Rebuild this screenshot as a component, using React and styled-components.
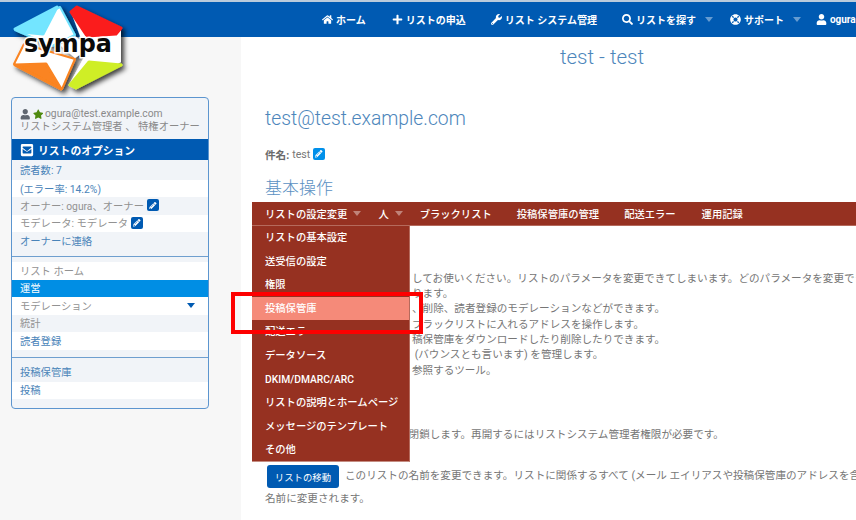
import React from 'react';
import styled, { createGlobalStyle } from 'styled-components';
import { FaHome, FaPlus, FaWrench, FaSearch, FaLifeRing, FaUser, FaStar, FaEnvelopeSquare, FaPencilAlt } from 'react-icons/fa';

const Global = createGlobalStyle`
  html, body { margin: 0; padding: 0; width: 856px; height: 520px; overflow: hidden; background: #fff; }
  body { font-family: Roboto, "Noto Sans CJK JP", sans-serif; font-size: 10.6px; color: #767676; }
  * { box-sizing: border-box; }
`;

const Page = styled.div`
  position: relative;
  width: 963px;
  height: 520px;
  overflow: hidden;
  border-top: 2px solid #b9cbdc;
`;
const Header = styled.header`
  height: 35px;
  background: #005ab2;
  display: flex;
  align-items: center;
  padding-left: 322px;
  color: #fff;
  font-weight: 700;
  font-size: 10px;
  white-space: nowrap;
`;
const NavItem = styled.span`
  display: inline-flex;
  align-items: center;
  gap: 3px;
  margin-right: ${p => p.$gap}px;
  svg { font-size: 11px; flex: none; }
`;
const Caret = styled.i`
  display: inline-block;
  width: 0;
  height: 0;
  margin-left: 6px;
  border-left: 4.5px solid transparent;
  border-right: 4.5px solid transparent;
  border-top: 5px solid ${p => p.$color || 'rgba(255,255,255,.4)'};
`;
const Columns = styled.div`
  display: grid;
  grid-template-columns: 241px 722px;
  height: 483px;
`;
const Side = styled.aside`
  background: #f7f7f7;
  padding: 60px 32px 0 11px;
`;
const Card = styled.div`
  border: 1px solid #5c95cf;
  border-radius: 4px;
  overflow: hidden;
  background: #f1f4f8;
  height: 312px;
  font-size: 10.3px;
`;
const UserBox = styled.div`
  height: 41px;
  padding: 10px 0 0 8px;
  line-height: 12.5px;
  color: #8a8a8a;
  white-space: nowrap;
  div:first-child { display: flex; align-items: center; gap: 2px; }
  svg { font-size: 10.5px; }
`;
const CardTitle = styled.div`
  height: 21px;
  background: #005ab2;
  color: #fff;
  font-weight: 700;
  font-size: 10.8px;
  display: flex;
  align-items: center;
  gap: 4px;
  padding-left: 8px;
  svg { font-size: 14px; }
`;
const Row = styled.div`
  height: ${p => p.$h || 17.5}px;
  background: ${p => (p.$active ? '#008ee4' : p.$alt ? '#f1f4f8' : '#fff')};
  color: ${p => (p.$active ? '#fff' : p.$link ? '#4a84b9' : '#929292')};
  display: flex;
  align-items: center;
  gap: 3px;
  padding: 0 13px 1px 8px;
  white-space: nowrap;
`;
const Divider = styled.div`
  height: 6px;
  margin-top: ${p => p.$top || 0}px;
  border-top: 1px solid #6f9fcf;
`;
const EditBadge = styled.span`
  display: inline-flex;
  width: 12px;
  height: 12px;
  border-radius: 2px;
  align-items: center;
  justify-content: center;
  background: ${p => p.$color};
  color: #fff;
  vertical-align: -2px;
  svg { font-size: 7.5px; }
`;
const Spacer = styled.span`
  flex: 1;
`;
const Main = styled.main`
  background: #fff;
`;
const Title = styled.h1`
  margin: 0;
  height: 40px;
  line-height: 40px;
  text-align: center;
  font-weight: 300;
  font-size: 20.5px;
  color: #4d86bb;
`;
const Address = styled.h2`
  margin: 27px 0 0 24px;
  height: 30px;
  line-height: 30px;
  font-weight: 300;
  font-size: 19.3px;
  color: #4d86bb;
`;
const Subject = styled.div`
  margin: 12px 0 0 24px;
  height: 16px;
  display: flex;
  align-items: center;
  gap: 3px;
  font-size: 10.6px;
  b { font-weight: 700; color: #6a6a6a; }
`;
const Section = styled.h3`
  margin: 14px 0 0 24px;
  height: 24px;
  line-height: 24px;
  font-weight: 300;
  font-size: 17px;
  color: #5a90c2;
`;
const Bar = styled.nav`
  position: relative;
  margin: 2px 0 0 11px;
  height: 24px;
  background: #963121;
  display: flex;
  align-items: center;
  padding-left: 13px;
  color: #fff;
  font-size: 10.3px;
  font-weight: 500;
  white-space: nowrap;
  border-bottom: 1px solid #b56a5c;
`;
const BarItem = styled.span`
  display: inline-flex;
  align-items: center;
  margin-right: ${p => p.$gap}px;
`;
const Drop = styled.div`
  position: absolute;
  left: 0;
  top: 24px;
  width: 158px;
  height: 236px;
  background: #963121;
  z-index: 2;
  border-bottom: 1px solid #c58d82;
  border-right: 1px solid #b56a5c;
`;
const DropItem = styled.div`
  height: 23.6px;
  line-height: 23.6px;
  padding-left: 13px;
  background: ${p => (p.$active ? '#f58a79' : 'transparent')};
`;
const Body = styled.div`
  margin: 44.5px 0 0 24px;
  white-space: nowrap;
`;
const Line = styled.div`
  height: 15.4px;
  line-height: 15.4px;
`;
const Lead = styled.span`
  display: inline-block;
  width: 147px;
  overflow: hidden;
  vertical-align: top;
  font-size: 10px;
`;
const Action = styled.p`
  margin: ${p => p.$top}px 0 0 24px;
  line-height: 21px;
  white-space: nowrap;
`;
const Button = styled.button`
  display: inline-block;
  width: 72px;
  height: 23px;
  margin: 0 6px 0 2px;
  padding: 0;
  border: 0;
  border-radius: 3px;
  background: #005ab2;
  color: #fff;
  font: 400 9.4px Roboto, "Noto Sans CJK JP", sans-serif;
  vertical-align: middle;
`;
const Highlight = styled.div`
  position: absolute;
  left: 231px;
  top: 290px;
  width: 192px;
  height: 41.5px;
  border: 4.5px solid #fe0000;
  z-index: 5;
`;
const LogoWrap = styled.div`
  position: absolute;
  left: 0;
  top: -2px;
  width: 135px;
  height: 100px;
  z-index: 4;
`;

function Logo() {
  return (
    <LogoWrap>
      <svg width="135" height="100" viewBox="0 0 135 100">
        <defs>
          <filter id="sh" x="-10%" y="-10%" width="130%" height="130%">
            <feDropShadow dx="3" dy="3" stdDeviation="2.5" floodColor="#000" floodOpacity=".75" />
          </filter>
        </defs>
        <g filter="url(#sh)" strokeLinejoin="round">
          <polygon points="15,30 60,7 75,35 52,46" fill="#fff" stroke="#6fe3ff" strokeWidth="2" />
          <polygon points="15,29 57,7 43,34 21,32" fill="#73e5ff" stroke="#73e5ff" strokeWidth="3" />
          <polygon points="71,12 77,7 121,29 121,62 89,60" fill="#fff" />
          <polygon points="71,12 77,7 121,28 116,34 87,36" fill="#fb1c1c" stroke="#fb1c1c" strokeWidth="3" />
          <polygon points="121,62 76,89 69,85 88,50" fill="#fff" />
          <polygon points="89,62 121,65 76,88 70,85" fill="#cfee26" stroke="#cfee26" strokeWidth="3" />
          <polygon points="24,44 75,59 62,89 14,64" fill="#fff" stroke="#fa8420" strokeWidth="2" />
          <polygon points="15,65 46,64 61,89" fill="#fa8420" stroke="#fa8420" strokeWidth="3" />
          <polygon points="60,45 75,36 90,48 75,58" fill="#fff" />
        </g>
        <text
          x="24"
          y="51.5"
          textLength="88"
          lengthAdjust="spacingAndGlyphs"
          fontFamily="DejaVu Sans"
          fontWeight="700"
          fontSize="25"
          fill="#0a0a0a"
          stroke="#fff"
          strokeWidth="3"
          paintOrder="stroke"
        >
          sympa
        </text>
      </svg>
    </LogoWrap>
  );
}

const menu = ['リストの基本設定', '送受信の設定', '権限', '投稿保管庫', '配送エラー', 'データソース', 'DKIM/DMARC/ARC', 'リストの説明とホームページ', 'メッセージのテンプレート', 'その他'];

export default function App() {
  return (
    <Page>
      <Global />
      <Logo />
      <Highlight />
      <Header>
        <NavItem $gap={26}><FaHome />ホーム</NavItem>
        <NavItem $gap={25}><FaPlus />リストの申込</NavItem>
        <NavItem $gap={25}><FaWrench />リスト システム管理</NavItem>
        <NavItem $gap={17}><FaSearch />リストを探す<Caret /></NavItem>
        <NavItem $gap={15}><FaLifeRing />サポート<Caret /></NavItem>
        <NavItem $gap={0}><FaUser />ogura@test.example.com</NavItem>
      </Header>
      <Columns>
        <Side>
          <Card>
            <UserBox>
              <div><FaUser color="#5f6670" /><FaStar color="#4f8a10" /><span>ogura@test.example.com</span></div>
              <div>リストシステム管理者 、 特権オーナー</div>
            </UserBox>
            <CardTitle><FaEnvelopeSquare />リストのオプション</CardTitle>
            <Row $alt $link $h={20}>読者数: 7</Row>
            <Row $link $h={17}>(エラー率: 14.2%)</Row>
            <Row $alt>オーナー: ogura、オーナー<EditBadge $color="#005ab2"><FaPencilAlt /></EditBadge></Row>
            <Row>モデレータ: モデレータ<EditBadge $color="#005ab2"><FaPencilAlt /></EditBadge></Row>
            <Row $alt $link $h={18}>オーナーに連絡</Row>
            <Divider $top={6} />
            <Row $h={17.5}>リスト ホーム</Row>
            <Row $active>運営</Row>
            <Row>モデレーション<Spacer /><Caret $color="#005ab2" /></Row>
            <Row $alt>統計</Row>
            <Row $link>読者登録</Row>
            <Divider $top={7} />
            <Row $alt $link $h={19}>投稿保管庫</Row>
            <Row $link>投稿</Row>
          </Card>
        </Side>
        <Main>
          <Title>test - test</Title>
          <Address>test@test.example.com</Address>
          <Subject><b>件名:</b> test <EditBadge $color="#0090ea"><FaPencilAlt /></EditBadge></Subject>
          <Section>基本操作</Section>
          <Bar>
            <BarItem $gap={17}>リストの設定変更<Caret /></BarItem>
            <BarItem $gap={17}>人<Caret /></BarItem>
            <BarItem $gap={25}>ブラックリスト</BarItem>
            <BarItem $gap={25}>投稿保管庫の管理</BarItem>
            <BarItem $gap={26}>配送エラー</BarItem>
            <BarItem $gap={0}>運用記録</BarItem>
            <Drop>
              {menu.map((m, i) => <DropItem key={m} $active={i === 3}>{m}</DropItem>)}
            </Drop>
          </Bar>
          <Body>
            <Line><Lead>これらの機能はすべて十分注意</Lead>してお使いください。リストのパラメータを変更できてしまいます。どのパラメータを変更できるかは権限によって異なります。</Line>
            <Line><Lead>権限により利用できる項目があ</Lead>ります。</Line>
            <Line><Lead>モデレーションでは投稿の配信</Lead>、削除、読者登録のモデレーションなどができます。</Line>
            <Line><Lead>ブラックリストの設定項目では</Lead>ブラックリストに入れるアドレスを操作します。</Line>
            <Line><Lead>保管庫の管理では、リストの投</Lead>稿保管庫をダウンロードしたり削除したりできます。</Line>
            <Line><Lead>配送エラーでは配送エラー読者</Lead> (バウンスとも言います) を管理します。</Line>
            <Line><Lead>運用記録はリストの運用記録を</Lead>参照するツール。</Line>
          </Body>
          <Action $top={46}><Button>リストの閉鎖</Button>このリストを閉鎖します。再開するにはリストシステム管理者権限が必要です。</Action>
          <Action $top={18}><Button>リストの移動</Button>このリストの名前を変更できます。リストに関係するすべて (メール エイリアスや投稿保管庫のアドレスを含む) が新しい<br />名前に変更されます。</Action>
        </Main>
      </Columns>
    </Page>
  );
}
